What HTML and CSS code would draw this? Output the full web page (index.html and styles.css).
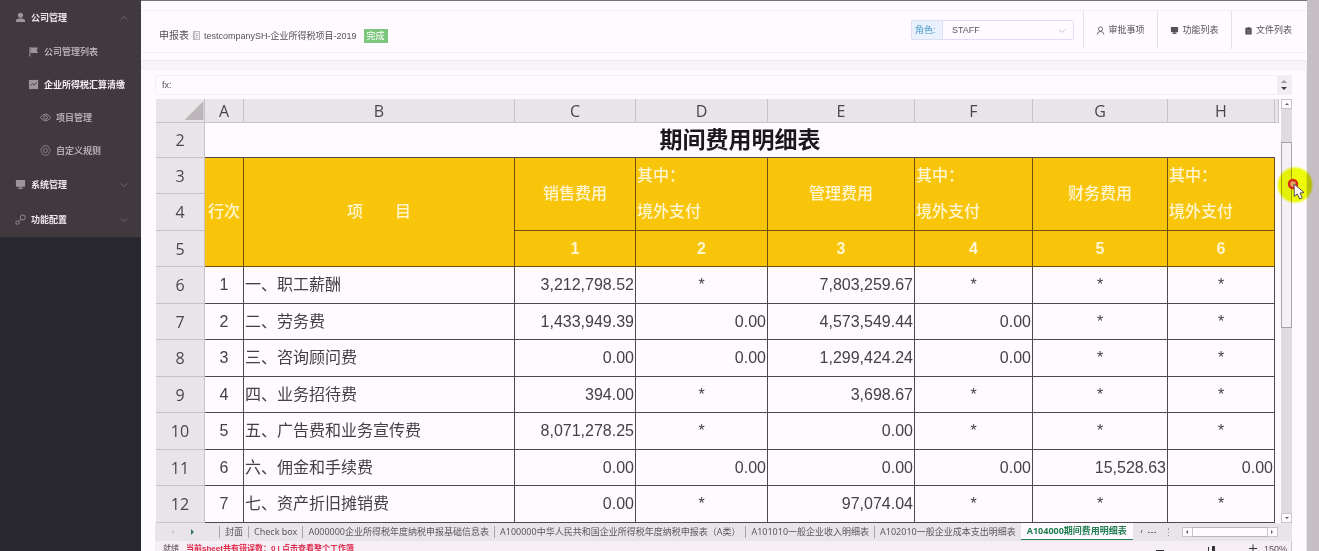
FILE: index.html
```html
<!DOCTYPE html>
<html lang="zh-CN">
<head>
<meta charset="utf-8">
<title>期间费用明细表</title>
<link rel="stylesheet" href="styles.css">
</head>
<body>
<div class="app">
  <aside class="sidebar">
    <nav class="menu">
      <a href="#" class="item top"><svg class="ico" viewBox="0 0 12 12"><circle cx="6" cy="3.6" r="2.8"/><path d="M1 11V9.6Q1 7.6 4.6 7h2.8Q11 7.6 11 9.6V11z"/></svg><span>公司管理</span><svg class="arrow" viewBox="0 0 8 8"><path d="M1 5.5l3-3 3 3"/></svg></a>
      <a href="#" class="item sub"><svg class="ico" viewBox="0 0 12 12"><path d="M1.500 1h1.200v10.500H1.500zM3 1.500h8L9.500 4.500 11 7.500H3z"/></svg><span>公司管理列表</span></a>
      <a href="#" class="item sub current"><svg class="ico" viewBox="0 0 12 12"><path d="M1 1h10v10H1z"/><path d="M3 7l2-2 1.500 1.500L9.500 4" fill="none" stroke="#40393d"/></svg><span>企业所得税汇算清缴</span></a>
      <a href="#" class="item leaf"><svg class="ico line" viewBox="0 0 12 12"><path d="M.5 6Q3 2.300 6 2.300T11.500 6Q9 9.700 6 9.700T.5 6z"/><circle cx="6" cy="6" r="2"/></svg><span>项目管理</span></a>
      <a href="#" class="item leaf"><svg class="ico line thin" viewBox="0 0 12 12"><path d="M3.500 1h5L11.300 6 8.500 11h-5L.7 6z"/><circle cx="6" cy="6" r="2.200"/></svg><span>自定义规则</span></a>
      <a href="#" class="item top"><svg class="ico" viewBox="0 0 12 12"><path d="M1 1h10v7.500H1zM5 8.500h2V10h2v1H3v-1h2z"/></svg><span>系统管理</span><svg class="arrow" viewBox="0 0 8 8"><path d="M1 2.500l3 3 3-3"/></svg></a>
      <a href="#" class="item top"><svg class="ico line" viewBox="0 0 12 12"><circle cx="8.500" cy="3.800" r="2.700"/><path d="M6.500 5.800L4.500 8"/><circle cx="2.800" cy="9.300" r="1.900"/></svg><span>功能配置</span><svg class="arrow" viewBox="0 0 8 8"><path d="M1 2.500l3 3 3-3"/></svg></a>
    </nav>
  </aside>

  <main class="main">
    <header class="header">
      <div class="crumb">
        <span class="crumb-root">申报表</span>
        <svg class="doc" viewBox="0 0 8 10"><path d="M.5.5h7v9h-7zM2 .5v9M3.500 3H6M3.500 5H6M3.500 7H6"/></svg>
        <span>testcompanySH-企业所得税项目-2019</span>
        <span class="tag">完成</span>
      </div>
      <div class="tools">
        <div class="role">
          <label for="role">角色:</label>
          <span class="select-wrap"><select id="role"><option>STAFF</option></select><svg class="caret" viewBox="0 0 8 8"><path d="M1 2.500l3 3 3-3"/></svg></span>
        </div>
        <button class="tool"><svg viewBox="0 0 10 10" class="outline"><circle cx="5" cy="3.300" r="2.300"/><path d="M1.300 9.500Q1.500 6 5 6t3.700 3.500"/></svg>审批事项</button>
        <button class="tool"><svg viewBox="0 0 10 10"><path d="M1 1h8v6H1zM4 7h2v1h1.500v1h-5V8H4z"/></svg>功能列表</button>
        <button class="tool"><svg viewBox="0 0 10 10"><path d="M1.500 2H4V1h2v1h2.500v7.500h-7z"/><path d="M3.500 5h3M3.500 7h3" stroke="#aaa3aa" stroke-width=".6"/></svg>文件列表</button>
      </div>
    </header>

    <section class="workbook">
      <div class="formula">
        <label for="fx">fx:</label><input id="fx" type="text">
        <div class="spin"><svg viewBox="0 0 14 18"><path d="M4 7l3-3 3 3z" fill="#9b949b"/><path d="M4 11l3 3 3-3z" fill="#3f383f"/></svg></div>
      </div>

      <div class="sheet">
        <table class="grid">
          <colgroup><col class="c-head"><col class="c-a"><col><col class="c-c"><col class="c-d"><col class="c-e"><col class="c-f"><col class="c-g"><col class="c-h"><col class="c-tail"></colgroup>
          <thead>
            <tr><th class="corner"><svg viewBox="0 0 20 20"><path d="M20 0v20H0z"/></svg></th><th>A</th><th>B</th><th>C</th><th>D</th><th>E</th><th>F</th><th>G</th><th>H</th><th></th></tr>
          </thead>
          <tbody>
            <tr class="title"><th>2</th><td colspan="8">期间费用明细表</td><td class="tail"></td></tr>
            <tr class="gold"><th>3</th><td rowspan="3">行次</td><td rowspan="3">项&emsp;&emsp;目</td><td rowspan="2">销售费用</td><td rowspan="2" class="left">其中：<br>境外支付</td><td rowspan="2">管理费用</td><td rowspan="2" class="left">其中：<br>境外支付</td><td rowspan="2">财务费用</td><td rowspan="2" class="left">其中：<br>境外支付</td><td class="tail"></td></tr>
            <tr class="gold"><th>4</th><td class="tail"></td></tr>
            <tr class="gold num"><th>5</th><td>1</td><td>2</td><td>3</td><td>4</td><td>5</td><td>6</td><td class="tail"></td></tr>
            <tr><th>6</th><td>1</td><td class="left">一、职工薪酬</td><td class="right">3,212,798.52</td><td>*</td><td class="right">7,803,259.67</td><td>*</td><td>*</td><td>*</td><td class="tail"></td></tr>
            <tr><th>7</th><td>2</td><td class="left">二、劳务费</td><td class="right">1,433,949.39</td><td class="right">0.00</td><td class="right">4,573,549.44</td><td class="right">0.00</td><td>*</td><td>*</td><td class="tail"></td></tr>
            <tr><th>8</th><td>3</td><td class="left">三、咨询顾问费</td><td class="right">0.00</td><td class="right">0.00</td><td class="right">1,299,424.24</td><td class="right">0.00</td><td>*</td><td>*</td><td class="tail"></td></tr>
            <tr><th>9</th><td>4</td><td class="left">四、业务招待费</td><td class="right">394.00</td><td>*</td><td class="right">3,698.67</td><td>*</td><td>*</td><td>*</td><td class="tail"></td></tr>
            <tr><th>10</th><td>5</td><td class="left">五、广告费和业务宣传费</td><td class="right">8,071,278.25</td><td>*</td><td class="right">0.00</td><td>*</td><td>*</td><td>*</td><td class="tail"></td></tr>
            <tr><th>11</th><td>6</td><td class="left">六、佣金和手续费</td><td class="right">0.00</td><td class="right">0.00</td><td class="right">0.00</td><td class="right">0.00</td><td class="right">15,528.63</td><td class="right">0.00</td><td class="tail"></td></tr>
            <tr><th>12</th><td>7</td><td class="left">七、资产折旧摊销费</td><td class="right">0.00</td><td>*</td><td class="right">97,074.04</td><td>*</td><td>*</td><td>*</td><td class="tail"></td></tr>
          </tbody>
        </table>
        <div class="vscroll">
          <button class="sbtn" aria-label="向上"><svg viewBox="0 0 8 8"><path d="M2 5l2-2 2 2z"/></svg></button>
          <div class="vtrack"><div class="vthumb"></div></div>
          <button class="sbtn" aria-label="向下"><svg viewBox="0 0 8 8"><path d="M2 3l2 2 2-2z"/></svg></button>
        </div>
      </div>

      <div class="tabs">
        <div class="tabnav"><svg viewBox="0 0 8 8" class="dim"><path d="M5 2L3 4l2 2z"/></svg><svg viewBox="0 0 8 8"><path d="M3 1l3 3-3 3z"/></svg></div>
        <button class="tab">封面</button><button class="tab">Check box</button><button class="tab">A000000企业所得税年度纳税申报基础信息表</button><button class="tab">A100000中华人民共和国企业所得税年度纳税申报表（A类）</button><button class="tab">A101010一般企业收入明细表</button><button class="tab">A102010一般企业成本支出明细表</button><button class="tab active">A104000期间费用明细表</button>
        <svg class="more" viewBox="0 0 18 10"><path d="M3 3L2 6" fill="none" stroke="#777"/><path d="M9 5h2v1H9zM12 5h2v1h-2zM15 5h2v1h-2z"/></svg>
        <svg class="grip" viewBox="0 0 4 10"><path d="M1 1h1v2H1zM1 5h1v1H1zM1 8h1v1H1z"/></svg>
        <div class="hscroll">
          <button class="sbtn" aria-label="向左"><svg viewBox="0 0 8 8"><path d="M5 2L3 4l2 2z"/></svg></button>
          <div class="hthumb"></div>
          <button class="sbtn" aria-label="向右"><svg viewBox="0 0 8 8"><path d="M3 2l2 2-2 2z"/></svg></button>
        </div>
      </div>

      <footer class="status">
        <span>就绪</span><span class="error">当前sheet共有错误数：0 | 点击查看整个工作簿</span>
        <div class="zoom">
          <svg viewBox="0 0 104 12"><path d="M2 8.500h8M95 6.500h8M99 2.500v8" stroke="#333" fill="none"/><path d="M54 5h1v6h-1zM58 4h3v7h-3z" fill="#333"/></svg>
          <span>150%</span>
        </div>
      </footer>

      <div class="halo"></div>
      <svg class="pointer" viewBox="0 0 36 40"><circle cx="16" cy="19" r="4" fill="#e0a860" stroke="#d62b12" stroke-width="2.500"/><path d="M17 19l.3 12.500 3-2.500 2.500 5 2.500-1.300-2.300-4.700 4-.5z" fill="#fffaff" stroke="#574e52"/></svg>
    </section>
  </main>
</div>
</body>
</html>
```
FILE: styles.css
```css
* { box-sizing: border-box; }
body {
  margin: 0;
  height: 100vh;
  overflow: hidden;
  background: #c5bfc3;
  color: #57505a;
  font: 9px/14px "Liberation Sans", "Noto Sans CJK SC", sans-serif;
}
button, input, select { font: inherit; color: inherit; border: 0; padding: 0; margin: 0; background: none; }
svg { display: block; flex: none; fill: currentColor; }
a { color: inherit; text-decoration: none; }

.app { display: flex; height: 100%; padding-right: 12px; }

.sidebar { flex: none; width: 141px; background: #28262e; }
.menu { background: #40393d; border-bottom: 1px solid #302c31; }
.item { display: flex; align-items: center; gap: 5px; height: 33px; padding: 0 13px 0 15px; color: #c9c1c8; font-weight: 500; white-space: nowrap; }
.item.top { height: 35px; color: #eee7ed; font-weight: 700; }
.item.sub { padding: 0 0 0 28px; }
.item.leaf { padding: 0 0 0 40px; }
.item.current { color: #f5eef4; font-weight: 700; }
.ico { width: 11px; height: 11px; color: #9d949e; }
.line { fill: none; stroke: currentColor; }
.thin { stroke-width: .8; }
.arrow { width: 8px; height: 8px; margin-left: auto; fill: none; stroke: #7d747b; stroke-width: .8; }

.main { flex: 1; min-width: 0; display: flex; flex-direction: column; background: #fefaff; border-top: 1px solid #7a727a; }
.header { flex: none; display: flex; justify-content: space-between; margin: 9px 0 7px; height: 43px; border: solid #f3edf4; border-width: 1px 0; }
.crumb { display: flex; align-items: center; gap: 4px; padding: 8px 0 0 18px; white-space: nowrap; }
.crumb-root { font-size: 10px; }
.doc { width: 7px; height: 9px; fill: none; stroke: #8b848c; stroke-width: .7; }
.tag { margin-left: 3px; padding: 0 3px; background: #7cc77c; color: #fff; }
.tools { display: flex; align-items: center; height: 38px; }
.role { display: flex; height: 20px; margin-right: 9px; border: 1px solid #dcdff2; border-radius: 2px; background: #e8f1fc; color: #4b9bc9; line-height: 18px; }
.role label { width: 30px; padding-left: 3px; }
.select-wrap { position: relative; display: flex; width: 131px; background: #fefaff; border-left: 1px solid #dcdff2; }
.select-wrap select { width: 100%; appearance: none; padding-left: 9px; color: #5b545e; }
.caret { position: absolute; right: 7px; top: 6px; width: 8px; height: 8px; fill: none; stroke: #b8b1bb; stroke-width: .8; pointer-events: none; }
.tool { display: flex; align-items: center; justify-content: center; gap: 3px; width: 74px; height: 100%; border-left: 1px solid #e6dfe6; white-space: nowrap; }
.tool:last-child { padding-right: 3px; width: 76px; }
.tool svg { width: 9px; height: 9px; }
.tool .outline { fill: none; stroke: currentColor; stroke-width: .9; }

.workbook { position: relative; flex: 1; min-height: 0; display: flex; flex-direction: column; padding: 15px 14px 0; border-right: 1px solid #efe9ef; background: linear-gradient(#eee8f0 1px, #f8f3fb 1px, #f8f3fb 9px, #f2ecf3 9px, #f2ecf3 10px, #fefaff 10px); }
.formula { flex: none; display: flex; align-items: center; height: 20px; margin-bottom: 4px; border: 1px solid #f4eef5; padding-left: 6px; }
.formula input { flex: 1; min-width: 0; padding-left: 4px; }
.spin { width: 14px; height: 18px; background: #f1ecf1; }

.sheet { flex: none; display: flex; gap: 2px; padding-left: 1px; }
.grid { flex: 1; min-width: 0; table-layout: fixed; border-spacing: 0; color: #454047; font-size: 16px; line-height: 20px; }
.c-head { width: 49px; }
.c-a { width: 39px; }
.c-c { width: 121px; }
.c-d { width: 132px; }
.c-e { width: 147px; }
.c-f { width: 118px; }
.c-g { width: 135px; }
.c-h { width: 107px; }
.c-tail { width: 4px; }
.grid th { padding: 0; background: #e9e4e8; border: solid #c9c2c8; border-width: 0 1px 1px 0; font: 16px/20px "Open Sans", sans-serif; color: #4b464c; }
.grid thead tr { height: 24px; }
.grid .corner svg { width: 20px; height: 19px; margin-left: auto; color: #bcb6ba; }
.grid td { padding: 0; border: solid #51484e; border-width: 0 1px 1px 0; text-align: center; white-space: nowrap; }
.grid tbody tr { height: 36px; }
.grid tbody tr:nth-child(odd) { height: 37px; }
.grid tbody tr.title:first-child { height: 35px; }
.grid .title td { border-right: 0; color: #1c171d; font-size: 23px; line-height: 30px; font-weight: 700; }
.grid .gold td { background: #f8c50b; color: #fff5cf; line-height: 36px; font-weight: 500; border-color: #70500c; }
.grid .gold.num td { font-weight: 700; line-height: 20px; }
.grid td.left { text-align: left; padding-left: 1px; }
.grid td.right { text-align: right; padding-right: 1px; }
.grid td.tail, .grid .gold td.tail { border: 0; background: none; line-height: 20px; }

.sbtn { display: flex; align-items: center; justify-content: center; width: 11px; height: 10px; border: 1px solid #cac3c9; background: #fefaff; color: #5f585f; }
.sbtn svg { flex: none; width: 8px; height: 8px; }
.vscroll { display: flex; flex-direction: column; width: 11px; }
.vtrack { flex: 1; padding-top: 33px; background: #e0dbe0; }
.vthumb { height: 50%; background: #f5f0f6; border: 1px solid #a8a1a8; }

.tabs { flex: none; display: flex; align-items: center; height: 18px; padding-right: 14px; background: #e9e4e8; font-family: "Noto Sans", "Noto Sans CJK SC", sans-serif; }
.tabnav { display: flex; gap: 11px; width: 64px; padding-left: 14px; color: #2f7a60; }
.tabnav svg { width: 8px; height: 8px; }
.tabnav .dim { color: #c3bcc2; }
.tab { padding: 0 5px; height: 12px; line-height: 12px; border-left: 1px solid #aba4aa; white-space: nowrap; color: #5d575d; }
.tab.active { height: 17px; line-height: 16px; padding: 0 6px; align-self: flex-start; border: 0; border-bottom: 1px solid #2b7d58; background: #fefaff; color: #1f7d4f; font-weight: 700; }
.more { width: 18px; height: 10px; margin-left: 6px; color: #777; }
.grip { width: 4px; height: 10px; margin: 0 auto; color: #999; }
.hscroll { display: flex; width: 96px; height: 10px; }
.hthumb { flex: 1; background: #fefaff; border: solid #b9b2b8; border-width: 1px 0; }

.status { flex: none; display: flex; height: 20px; padding: 1px 4px 0 8px; gap: 7px; background: #f5eef4; border-right: 1px solid #cfc8ce; font-size: 8px; }
.error { color: #e02a4c; font-weight: 700; }
.zoom { display: flex; gap: 6px; margin-left: auto; font-size: 9px; }
.zoom svg { width: 104px; height: 12px; }

.halo, .pointer { position: absolute; right: -7px; top: 105px; width: 36px; height: 40px; }
.halo { border-radius: 50%; background: radial-gradient(circle at center, #eeff0a 16px, transparent 19px); mix-blend-mode: multiply; }
```
